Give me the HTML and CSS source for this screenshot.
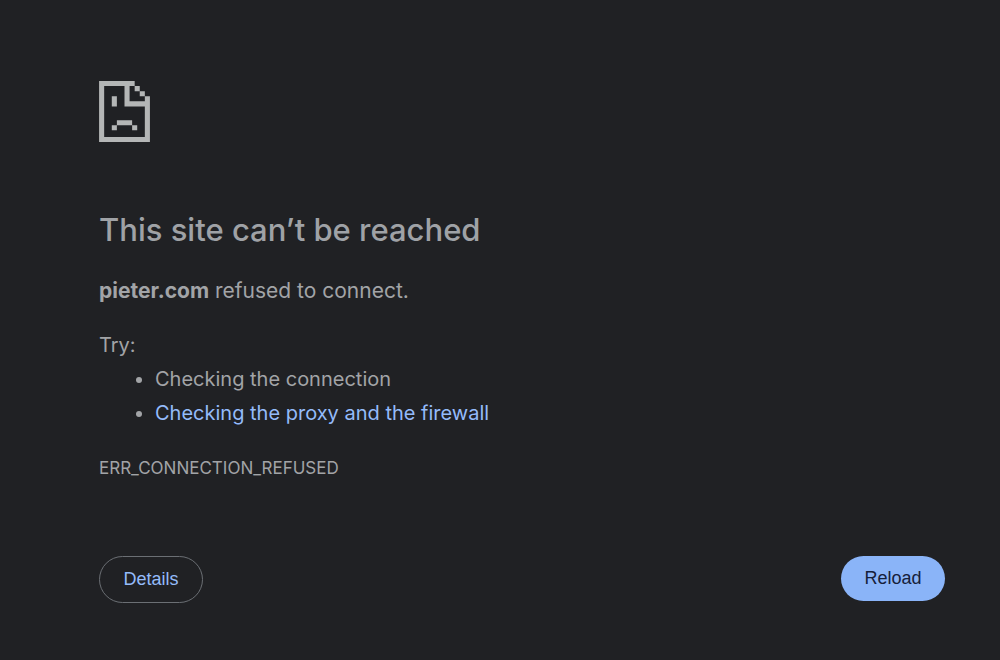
FILE: index.html
```html
<!DOCTYPE html>
<html lang="en">
<head>
<meta charset="utf-8">
<title>pieter.com</title>
<link rel="stylesheet" href="styles.css">
</head>
<body>
<main class="error-page">
  <svg class="sad-page" viewBox="0 0 20 24" aria-hidden="true">
    <path fill="currentColor" fill-rule="evenodd" d="M0 0H14V2H16V4H18V6H20V24H0ZM2 2V22H18V10H10V2ZM12 2V8H18V6H16V4H14V2Z"/>
    <path fill="currentColor" d="M5 6H7V10H5ZM7 15.400H13V17.400H7ZM5 17.400H7V19.400H5ZM13 17.400H15V19.400H13Z"/>
  </svg>
  <h1 class="title">This site can’t be reached</h1>
  <p class="summary"><strong>pieter.com</strong> refused to connect.</p>
  <section class="suggestions">
    <p class="lead">Try:</p>
    <ul class="list">
      <li>Checking the connection</li>
      <li><a class="link" href="#">Checking the proxy and the firewall</a></li>
    </ul>
  </section>
  <p class="code">ERR_CONNECTION_REFUSED</p>
  <div class="actions">
    <button class="button details" type="button">Details</button>
    <button class="button reload" type="button">Reload</button>
  </div>
</main>
</body>
</html>
```
FILE: styles.css
```css
* { box-sizing: border-box; }
body {
  margin: 0;
  background: #202124;
  color: #a2a4a7;
  font-family: Inter, "Liberation Sans", sans-serif;
  font-size: 20px;
  line-height: 34px;
}
.error-page { padding: 81px 55px 56px 99px; }
.sad-page { display: block; width: 51px; height: 61px; color: #b4b6b6; }
.title { margin: 68px 0 0; color: #9fa2a6; font-size: 31px; line-height: 40px; font-weight: 500; }
.summary { margin: 24px 0 0; font-size: 21px; }
.suggestions { margin-top: 20px; }
.lead { margin: 0; }
.list { margin: 0; padding-left: 56px; }
.link { color: #94bbfa; text-decoration: none; }
.code { margin: 24px 0 0; font-size: 17px; line-height: 28px; }
.actions { display: flex; justify-content: space-between; align-items: flex-start; margin-top: 74px; }
.button {
  min-width: 104px;
  height: 45px;
  padding: 0 16px;
  border: 0;
  border-radius: 24px;
  font-family: "Liberation Sans", Arial, sans-serif;
  font-size: 18px;
}
.details { height: 47px; border: 1px solid #6b6f74; background: transparent; color: #94bbfa; }
.reload { background: #8ab4f8; color: #15203a; }
```
